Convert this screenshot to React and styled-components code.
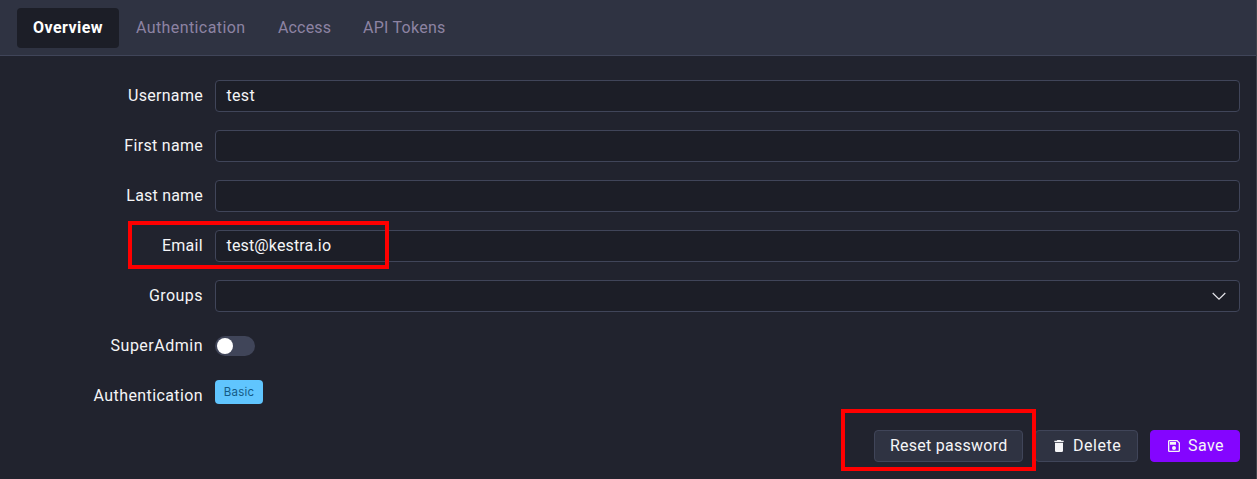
import React from "react";
import styled, { createGlobalStyle } from "styled-components";

const GlobalStyle = createGlobalStyle`
  *, *::before, *::after { box-sizing: border-box; }
  body {
    margin: 0;
    background: #21232e;
    font-family: Roboto, "Liberation Sans", sans-serif;
    font-size: 16px;
    line-height: 24px;
    color: #f5f5f7;
  }
`;

const Page = styled.main`
  position: relative;
  height: 479px;
  overflow: hidden;
  background: #21232e;
  border-right: 1px solid #40424b;
`;

const Tabs = styled.nav`
  display: flex;
  height: 56px;
  padding: 8px 17px 7px;
  background: #2f3342;
  border-bottom: 1px solid #404559;
`;

const Tab = styled.a`
  width: ${(p) => p.$width}px;
  height: 40px;
  padding: 8px 0 0 16px;
  border-radius: 4px;
  white-space: nowrap;
  letter-spacing: ${(p) => p.$spacing}px;
  color: ${(p) => (p.$active ? "#ffffff" : "#8d83a3")};
  background: ${(p) => (p.$active ? "#1c1e27" : "transparent")};
  font-weight: ${(p) => (p.$active ? 700 : 400)};
  margin-right: 1px;
`;

const Form = styled.form`
  display: flex;
  flex-direction: column;
  gap: 18px;
  padding: 24px 16px 0 0;
`;

const Row = styled.div`
  display: grid;
  grid-template-columns: 203px 1fr;
  column-gap: 12px;
  height: 32px;
`;

const Label = styled.label`
  padding-top: 4px;
  text-align: right;
  white-space: nowrap;

  span {
    letter-spacing: ${(p) => p.$spacing}px;
  }
`;

const Field = styled.div`
  display: flex;
  justify-content: space-between;
  height: 32px;
  padding: 3px 12px 0 10.5px;
  background: #1c1e27;
  border: 1px solid #404559;
  border-radius: 4px;
  letter-spacing: ${(p) => p.$spacing || 0}px;
`;

const Chevron = styled.svg`
  width: 16px;
  height: 16px;
  margin: 4px 0 0 auto;
`;

const Switch = styled.div`
  width: 40px;
  height: 20px;
  margin-top: 6px;
  padding: 2px;
  border-radius: 10px;
  background: #404559;

  &::before {
    content: "";
    display: block;
    width: 16px;
    height: 16px;
    border-radius: 50%;
    background: #fff;
  }
`;

const Tag = styled.span`
  width: 48px;
  height: 24px;
  border-radius: 4px;
  background: #60c5fe;
  color: #145a86;
  font-family: Inter, sans-serif;
  font-size: 11.5px;
  letter-spacing: 0.2px;
  text-align: center;
`;

const Actions = styled.div`
  display: flex;
  justify-content: flex-end;
  gap: 12px;
`;

const Button = styled.button`
  display: flex;
  align-items: center;
  width: ${(p) => p.$width}px;
  height: 32px;
  padding: 0 0 0 15px;
  border: 1px solid ${(p) => (p.$primary ? "#8405ff" : "#404559")};
  border-radius: 4px;
  background: ${(p) => (p.$primary ? "#8405ff" : "#2f3342")};
  color: #f5f5f7;
  font: inherit;
  white-space: nowrap;
  letter-spacing: ${(p) => p.$spacing}px;

  svg {
    flex: none;
    width: 16px;
    height: 16px;
    margin-right: 6px;
    fill: currentColor;
  }
`;

const Highlight = styled.div`
  position: absolute;
  left: ${(p) => p.$x}px;
  top: ${(p) => p.$y}px;
  width: ${(p) => p.$w}px;
  height: ${(p) => p.$h}px;
  border: 4px solid #ff0000;
  pointer-events: none;
`;

const tabs = [
  { name: "Overview", width: 102, spacing: 0.45, active: true },
  { name: "Authentication", width: 141, spacing: 0.4 },
  { name: "Access", width: 84, spacing: 0.15 },
  { name: "API Tokens", width: 115, spacing: 0.25 },
];

function FormRow({ label, spacing = 0.4, children }) {
  return (
    <Row>
      <Label $spacing={spacing}><span>{label}</span></Label>
      {children}
    </Row>
  );
}

export default function App() {
  return (
    <Page>
      <GlobalStyle />
      <Tabs>
        {tabs.map((t) => (
          <Tab key={t.name} $width={t.width} $spacing={t.spacing} $active={t.active}>{t.name}</Tab>
        ))}
      </Tabs>
      <Form>
        <FormRow label="Username" spacing={0.3}><Field $spacing={0.3}>test</Field></FormRow>
        <FormRow label="First name" spacing={0.3}><Field /></FormRow>
        <FormRow label="Last name" spacing={0.2}><Field /></FormRow>
        <FormRow label="Email" spacing={0.3}><Field $spacing={0.15}>test@kestra.io</Field></FormRow>
        <FormRow label="Groups" spacing={0.45}>
          <Field>
            <Chevron viewBox="0 0 16 16">
              <path d="M1.7 5 8 11.2 14.3 5" fill="none" stroke="#e4e4e8" strokeWidth="1.2" />
            </Chevron>
          </Field>
        </FormRow>
        <FormRow label="SuperAdmin" spacing={0.5}><Switch /></FormRow>
        <FormRow label="Authentication"><Tag>Basic</Tag></FormRow>
        <Actions>
          <Button type="button" $width={149} $spacing={0.25}>Reset password</Button>
          <Button type="button" $width={103} $spacing={0.55}>
            <svg viewBox="0 0 24 24">
              <path d="M19 4h-3.5l-1-1h-5l-1 1H5v2h14M6 19a2 2 0 0 0 2 2h8a2 2 0 0 0 2-2V7H6v12Z" />
            </svg>
            Delete
          </Button>
          <Button type="button" $width={90} $spacing={0.4} $primary>
            <svg viewBox="0 0 24 24">
              <path d="M17 3H5a2 2 0 0 0-2 2v14a2 2 0 0 0 2 2h14a2 2 0 0 0 2-2V7l-4-4m2 16H5V5h11.17L19 7.83V19m-7-7a3 3 0 0 0-3 3 3 3 0 0 0 3 3 3 3 0 0 0 3-3 3 3 0 0 0-3-3M6 6h9v4H6V6Z" />
            </svg>
            Save
          </Button>
        </Actions>
      </Form>
      <Highlight $x={128} $y={221} $w={261} $h={48} />
      <Highlight $x={841} $y={409} $w={195} $h={62} />
    </Page>
  );
}
